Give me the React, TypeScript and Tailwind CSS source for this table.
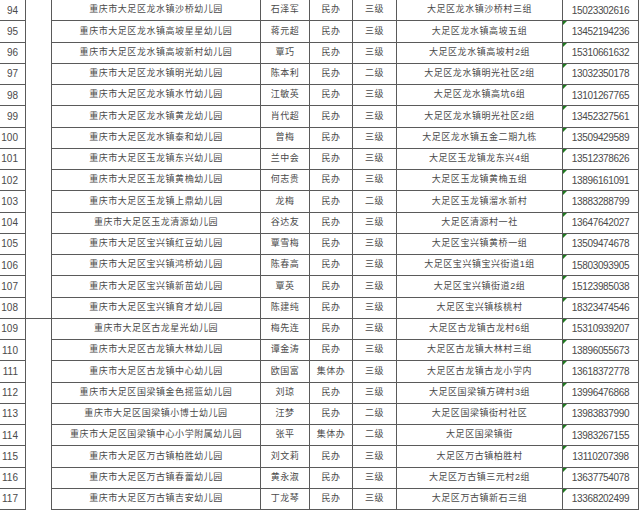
import React from 'react';

type Row = [number, string, string, string, string, string, string];

const rows: Row[] = [
  [94, '重庆市大足区龙水镇沙桥幼儿园', '石泽军', '民办', '三级', '大足区龙水镇沙桥村三组', '15023302616'],
  [95, '重庆市大足区龙水镇高坡星星幼儿园', '蒋元超', '民办', '三级', '大足区龙水镇高坡五组', '13452194236'],
  [96, '重庆市大足区龙水镇高坡新村幼儿园', '覃巧', '民办', '三级', '大足区龙水镇高坡村2组', '15310661632'],
  [97, '重庆市大足区龙水镇明光幼儿园', '陈本利', '民办', '二级', '大足区龙水镇明光社区2组', '13032350178'],
  [98, '重庆市大足区龙水镇水竹幼儿园', '江敏英', '民办', '三级', '大足区龙水镇高坑6组', '13101267765'],
  [99, '重庆市大足区龙水镇黄龙幼儿园', '肖代超', '民办', '三级', '大足区龙水镇明光社区2组', '13452327561'],
  [100, '重庆市大足区龙水镇泰和幼儿园', '曾梅', '民办', '三级', '大足区龙水镇五金二期九栋', '13509429589'],
  [101, '重庆市大足区玉龙镇东兴幼儿园', '兰中会', '民办', '三级', '大足区玉龙镇龙东兴4组', '13512378626'],
  [102, '重庆市大足区玉龙镇黄桷幼儿园', '何志贵', '民办', '三级', '大足区玉龙镇黄桷五组', '13896161091'],
  [103, '重庆市大足区玉龙镇上鼎幼儿园', '龙梅', '民办', '二级', '大足区玉龙镇溜水新村', '13883288799'],
  [104, '重庆市大足区玉龙清源幼儿园', '谷达友', '民办', '三级', '大足区清源村一社', '13647642027'],
  [105, '重庆市大足区宝兴镇红豆幼儿园', '覃雪梅', '民办', '三级', '大足区宝兴镇黄桥一组', '13509474678'],
  [106, '重庆市大足区宝兴镇鸿桥幼儿园', '陈春高', '民办', '三级', '大足区宝兴镇宝兴街道1组', '15803093905'],
  [107, '重庆市大足区宝兴镇新苗幼儿园', '覃英', '民办', '三级', '大足区宝兴镇街道2组', '15123985038'],
  [108, '重庆市大足区宝兴镇育才幼儿园', '陈建纯', '民办', '三级', '大足区宝兴镇核桃村', '18323474546'],
  [109, '重庆市大足区古龙星光幼儿园', '梅先连', '民办', '三级', '大足区古龙镇古龙村6组', '15310939207'],
  [110, '重庆市大足区古龙镇大林幼儿园', '谭金涛', '民办', '三级', '大足区古龙镇大林村三组', '13896055673'],
  [111, '重庆市大足区古龙镇中心幼儿园', '欧国富', '集体办', '三级', '大足区古龙镇古龙小学内', '13618372778'],
  [112, '重庆市大足区国梁镇金色摇篮幼儿园', '刘琼', '民办', '三级', '大足区国梁镇方碑村3组', '13996476868'],
  [113, '重庆市大足区国梁镇小博士幼儿园', '汪梦', '民办', '二级', '大足区国梁镇街村社区', '13983837990'],
  [114, '重庆市大足区国梁镇中心小学附属幼儿园', '张平', '集体办', '二级', '大足区国梁镇街', '13983267155'],
  [115, '重庆市大足区万古镇柏胜幼儿园', '刘文莉', '民办', '三级', '大足区万古镇柏胜村', '13110207398'],
  [116, '重庆市大足区万古镇春蕾幼儿园', '黄永淑', '民办', '三级', '大足区万古镇三元村2组', '13637754078'],
  [117, '重庆市大足区万古镇吉安幼儿园', '丁龙琴', '民办', '三级', '大足区万古镇新石三组', '13368202499'],
];

const cjk = 'flex items-center justify-center border-r border-b border-[#5a5a5a] text-[9px] tracking-[0.55px] whitespace-nowrap';

const App = (): React.ReactElement => {
  return (
    <div
      className="w-[640px] h-[511px] overflow-hidden bg-white text-[#4a4a4a]"
      style={{ fontFamily: '"Liberation Sans", "Noto Sans CJK SC", sans-serif' }}
    >
      {rows.map(([no, name, person, kind, level, addr, phone]) => (
        <div
          key={no}
          className="grid h-[21.25px] grid-cols-[26px_26px_209px_49px_43px_44px_166px_76px]"
        >
          <div className="flex items-center justify-end border-r border-b border-[#5a5a5a] pr-[7px] text-[10px]">
            {no}
          </div>
          <div className={`border-r border-[#5a5a5a] ${no === 108 ? 'border-b' : ''}`} />
          <div className={cjk}>{name}</div>
          <div className={cjk}>{person}</div>
          <div className={cjk}>{kind}</div>
          <div className={cjk}>{level}</div>
          <div className={cjk}>{addr}</div>
          <div className="relative flex items-center justify-center border-r border-b border-[#5a5a5a] text-[10px] tracking-[-0.35px]">
            {no !== 94 && (
              <span className="absolute left-0 top-0 h-0 w-0 border-t-[4px] border-r-[4px] border-t-[#1f7a1f] border-r-transparent" />
            )}
            {phone}
          </div>
        </div>
      ))}
    </div>
  );
};

export default App;
